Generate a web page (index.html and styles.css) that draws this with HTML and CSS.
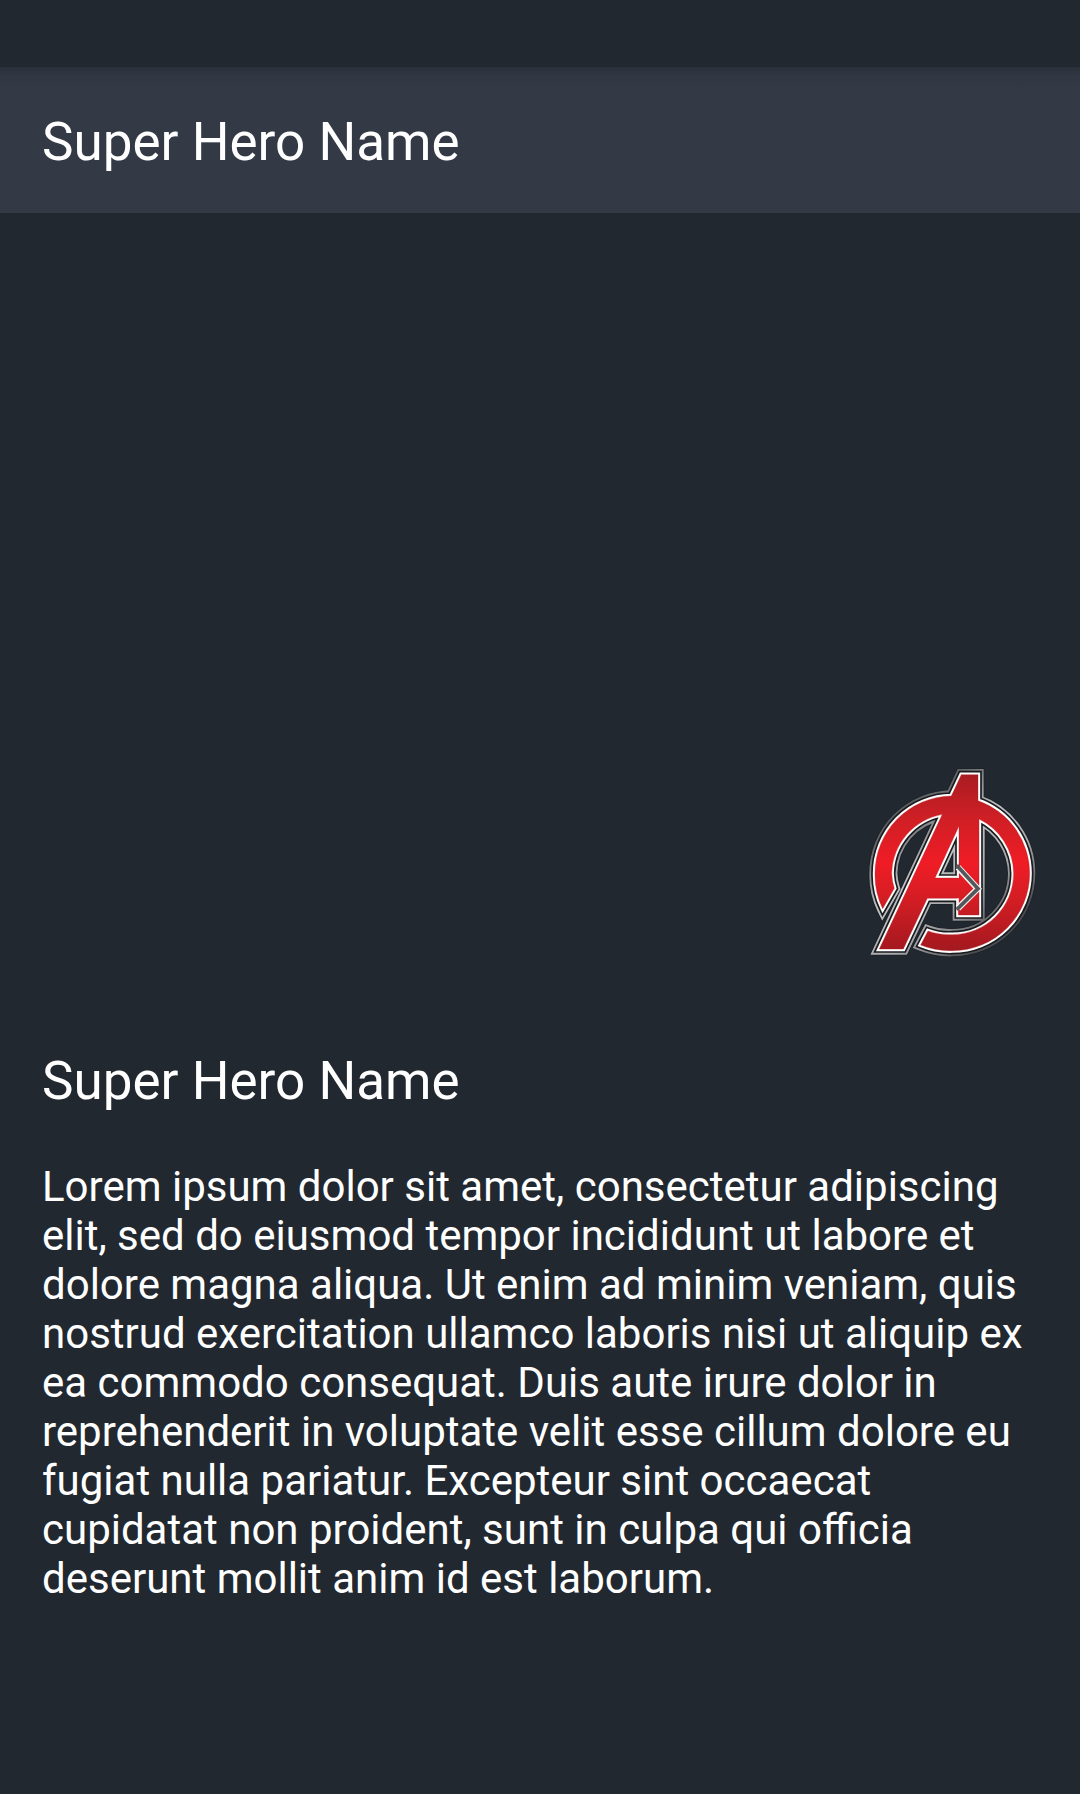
FILE: index.html
```html
<!DOCTYPE html>
<html lang="en">
<head>
<meta charset="utf-8">
<meta name="viewport" content="width=device-width, initial-scale=1">
<title>Super Hero Name</title>
<link rel="stylesheet" href="styles.css">
</head>
<body>
<header class="toolbar">
  <h1 class="title">Super Hero Name</h1>
</header>
<main>
  <div class="hero">
    <svg class="logo" viewBox="0 0 570 615" role="img" aria-label="Avengers logo">
      <defs>
        <linearGradient id="red" x1="0" y1="44" x2="0" y2="572" gradientUnits="userSpaceOnUse">
          <stop offset="0" stop-color="#a91c22"/>
          <stop offset=".25" stop-color="#cf1f25"/>
          <stop offset=".5" stop-color="#f01c25"/>
          <stop offset=".7" stop-color="#d51d24"/>
          <stop offset="1" stop-color="#a3191f"/>
        </linearGradient>
        <linearGradient id="silver" x1="100" y1="100" x2="470" y2="540" gradientUnits="userSpaceOnUse">
          <stop offset="0" stop-color="#44484b"/>
          <stop offset=".15" stop-color="#66696c"/>
          <stop offset=".4" stop-color="#c0c1c2"/>
          <stop offset=".65" stop-color="#a6a8aa"/>
          <stop offset=".9" stop-color="#4a4d50"/>
        </linearGradient>
        <path id="mark" d="M68 446A232 232 0 0 1 45 340A232 232 0 0 1 274 108L304 44H354V122A232 232 0 0 1 509 340A232 232 0 0 1 277 572A232 232 0 0 1 182 555L204 513A184 184 0 0 0 277 524A184 184 0 0 0 461 340A184 184 0 0 0 357 177V465H295V415H202L130 567H58L247 163A184 184 0 0 0 95 340Q96 365 103 385ZM297 198L225 354H297Z"/>
      </defs>
      <g fill="none" stroke-miterlimit="6">
        <use href="#mark" stroke="#1a1d21" stroke-width="39" opacity=".6"/>
        <use href="#mark" stroke="url(#silver)" stroke-width="34"/>
        <use href="#mark" stroke="#191b1e" stroke-width="23"/>
        <use href="#mark" stroke="#fff" stroke-width="13"/>
      </g>
      <use href="#mark" fill="url(#red)" fill-rule="evenodd" stroke="#a81a20" stroke-width="1"/>
      <path d="M297 354V340L345 386L297 430V415" fill="url(#red)"/>
      <g fill="none">
        <path d="M294 322L353 386L294 445" stroke="#f4f2f2" stroke-width="19"/>
        <path d="M290 316L354 386L290 449" stroke="#55585a" stroke-width="11"/>
        <path d="M294 354V333M294 415V436" stroke="#f4f2f2" stroke-width="5"/>
      </g>
    </svg>
  </div>
  <section class="details">
    <h2 class="title">Super Hero Name</h2>
    <p class="description">Lorem ipsum dolor sit amet, consectetur adipiscing elit, sed do eiusmod tempor incididunt ut labore et dolore magna aliqua. Ut enim ad minim veniam, quis nostrud exercitation ullamco laboris nisi ut aliquip ex ea commodo consequat. Duis aute irure dolor in reprehenderit in voluptate velit esse cillum dolore eu fugiat nulla pariatur. Excepteur sint occaecat cupidatat non proident, sunt in culpa qui officia deserunt mollit anim id est laborum.</p>
  </section>
</main>
</body>
</html>
```
FILE: styles.css
```css
* {
  box-sizing: border-box;
}

body {
  margin: 0;
  padding-top: 67px;
  min-height: 100vh;
  background: #222830;
  color: #fff;
  font-family: Roboto, "Liberation Sans", sans-serif;
}

.toolbar {
  padding: 44px 42px 40px;
  background: linear-gradient(#2a3039, #313742 8px, #333945 24px);
}

.title {
  margin: 0;
  font-size: 53px;
  font-weight: 400;
  line-height: 62px;
}

.hero {
  display: flex;
  justify-content: flex-end;
  align-items: flex-end;
  height: 794px;
  padding: 42px 30px;
}

.logo {
  width: 190px;
  height: 205px;
}

.details {
  padding: 43px 42px 42px;
}

.description {
  margin: 50px 0 0;
  font-size: 42px;
  line-height: 49px;
}
```
